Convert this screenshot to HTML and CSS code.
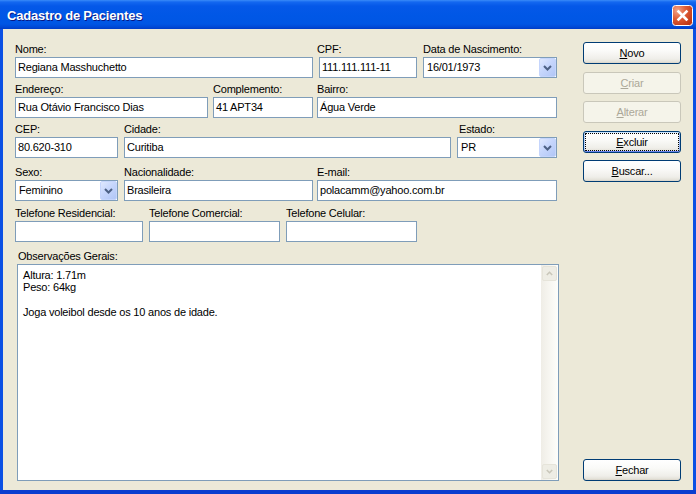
FILE: index.html
```html
<!DOCTYPE html>
<html lang="pt-BR">
<head>
<meta charset="utf-8">
<title>Cadastro de Pacientes</title>
<link rel="stylesheet" href="styles.css">
</head>
<body>
<div class="window">
  <div class="titlebar">
    <span class="title">Cadastro de Pacientes</span>
    <div class="close">
      <svg width="21" height="21" viewBox="0 0 21 21">
        <defs>
          <radialGradient id="cg" cx="25%" cy="25%" r="85%">
            <stop offset="0" stop-color="#F2A58A"/>
            <stop offset="0.5" stop-color="#DF5D36"/>
            <stop offset="1" stop-color="#BF3817"/>
          </radialGradient>
        </defs>
        <rect x="0.5" y="0.5" width="20" height="20" rx="3" fill="url(#cg)" stroke="#FFFFFF"/>
        <path d="M6.5 6.5L14.5 14.5M14.5 6.5L6.5 14.5" stroke="#FFFFFF" stroke-width="2.6" stroke-linecap="square"/>
      </svg>
    </div>
  </div>
  <div class="client">
    <div class="form">
      <div class="row">
        <div class="field w-nome"><label>Nome:</label><div class="input">Regiana Masshuchetto</div></div>
        <div class="field w-cpf"><label>CPF:</label><div class="input cpf-input">111.111.111-11</div></div>
        <div class="field w-data"><label>Data de Nascimento:</label>
          <div class="input select"><span class="val">16/01/1973</span><span class="dd"><svg width="9" height="6" viewBox="0 0 9 6"><path d="M1 1L4.5 4.5L8 1" stroke="#4D6185" stroke-width="2" fill="none"/></svg></span></div>
        </div>
      </div>
      <div class="row gap5">
        <div class="field w-end"><label>Endereço:</label><div class="input">Rua Otávio Francisco Dias</div></div>
        <div class="field w-comp"><label>Complemento:</label><div class="input">41 APT34</div></div>
        <div class="field w-bairro"><label>Bairro:</label><div class="input">Água Verde</div></div>
      </div>
      <div class="row gap5">
        <div class="field w-cep"><label>CEP:</label><div class="input">80.620-310</div></div>
        <div class="field w-cidade"><label>Cidade:</label><div class="input">Curitiba</div></div>
        <div class="field w-estado"><label class="lbl-estado">Estado:</label>
          <div class="input select"><span class="val">PR</span><span class="dd"><svg width="9" height="6" viewBox="0 0 9 6"><path d="M1 1L4.5 4.5L8 1" stroke="#4D6185" stroke-width="2" fill="none"/></svg></span></div>
        </div>
      </div>
      <div class="row gap8">
        <div class="field w-sexo"><label>Sexo:</label>
          <div class="input select"><span class="val">Feminino</span><span class="dd"><svg width="9" height="6" viewBox="0 0 9 6"><path d="M1 1L4.5 4.5L8 1" stroke="#4D6185" stroke-width="2" fill="none"/></svg></span></div>
        </div>
        <div class="field w-nac"><label>Nacionalidade:</label><div class="input">Brasileira</div></div>
        <div class="field w-email"><label>E-mail:</label><div class="input">polacamm@yahoo.com.br</div></div>
      </div>
      <div class="row gap6">
        <div class="field w-telres"><label>Telefone Residencial:</label><div class="input"></div></div>
        <div class="field w-telcom"><label>Telefone Comercial:</label><div class="input"></div></div>
        <div class="field w-telcel"><label>Telefone Celular:</label><div class="input"></div></div>
      </div>
      <div class="row gap8">
        <div class="field w-obs"><label class="lbl-obs">Observações Gerais:</label>
          <div class="memo">
            <div class="memo-text">Altura: 1.71m<br>Peso: 64kg<br><br>Joga voleibol desde os 10 anos de idade.</div>
            <div class="vscroll">
              <div class="sb-btn"><svg width="7" height="5" viewBox="0 0 7 5"><path d="M0.8 4L3.5 1.3L6.2 4" stroke="#C9C7BA" stroke-width="1.6" fill="none"/></svg></div>
              <div class="sb-btn"><svg width="7" height="5" viewBox="0 0 7 5"><path d="M0.8 1L3.5 3.7L6.2 1" stroke="#C9C7BA" stroke-width="1.6" fill="none"/></svg></div>
            </div>
          </div>
        </div>
      </div>
    </div>
    <div class="buttons">
      <div class="btn"><u>N</u>ovo</div>
      <div class="btn disabled"><u>C</u>riar</div>
      <div class="btn disabled"><u>A</u>lterar</div>
      <div class="btn focus"><u>E</u>xcluir</div>
      <div class="btn"><u>B</u>uscar...</div>
      <div class="btn fechar"><u>F</u>echar</div>
    </div>
  </div>
</div>
</body>
</html>
```

FILE: styles.css
```css
html, body {
  margin: 0;
  padding: 0;
}
body {
  width: 696px;
  height: 494px;
  overflow: hidden;
  font-family: "Liberation Sans", Arial, sans-serif;
  font-size: 11px;
  letter-spacing: -0.2px;
  color: #000;
}
.window {
  width: 696px;
  height: 494px;
  box-sizing: border-box;
  display: flex;
  flex-direction: column;
  background: #0B50E4;
  border-bottom: 4px solid #0A3DCF;
}
.titlebar {
  height: 29px;
  flex: none;
  display: flex;
  align-items: flex-start;
  padding: 0 3px 0 7px;
  background: linear-gradient(to bottom, #3A8BF8 0, #1468F0 2px, #0558E8 6px, #0057E6 16px, #0056E4 24px, #0049D6 27px, #003CC6 29px);
}
.title {
  margin-top: 8px;
  font-weight: bold;
  font-size: 13px;
  line-height: 15px;
  letter-spacing: -0.2px;
  color: #fff;
  text-shadow: 1px 1px #0A1883;
  white-space: nowrap;
}
.close {
  margin-left: auto;
  margin-top: 5px;
  width: 21px;
  height: 21px;
}
.close svg {
  display: block;
}
.client {
  flex: 1;
  margin: 0 3px;
  background: #ECE9D8;
  display: flex;
}
.form {
  width: 568px;
  flex: none;
  padding: 14px 0 0 12px;
}
.row {
  display: flex;
}
.gap5 { margin-top: 5px; }
.gap6 { margin-top: 6px; }
.gap8 { margin-top: 8px; }
.field {
  display: flex;
  flex-direction: column;
  flex: none;
}
label {
  display: block;
  height: 13px;
  line-height: 13px;
  margin-bottom: 1px;
  white-space: nowrap;
}
.input {
  height: 21px;
  box-sizing: border-box;
  border: 1px solid #7F9DB9;
  background: #fff;
  padding: 0 2px;
  line-height: 19px;
  white-space: nowrap;
  overflow: hidden;
}
.select {
  display: flex;
  padding: 0;
}
.select .val {
  flex: 1;
  padding-left: 3px;
}
.dd {
  width: 17px;
  height: 19px;
  box-sizing: border-box;
  border: 1px solid #C5D5FC;
  border-radius: 2px;
  background: linear-gradient(135deg, #DFE8FE 0%, #C6D6FC 45%, #B1C6F6 100%);
  display: flex;
  align-items: center;
  justify-content: center;
}
.dd svg { display: block; }

.w-nome { width: 298px; }
.w-cpf { width: 100px; margin-left: 4px; }
.cpf-input { margin-left: 2px; }
.w-data { width: 134px; margin-left: 6px; }

.w-end { width: 193px; }
.w-comp { width: 100px; margin-left: 5px; }
.w-bairro { width: 240px; margin-left: 4px; }

.w-cep { width: 103px; }
.w-cidade { width: 327px; margin-left: 6px; }
.w-estado { width: 100px; margin-left: 6px; }
.lbl-estado { padding-left: 2px; }

.w-sexo { width: 103px; }
.w-nac { width: 189px; margin-left: 6px; }
.w-email { width: 240px; margin-left: 4px; }

.w-telres { width: 128px; }
.w-telcom { width: 131px; margin-left: 6px; }
.w-telcel { width: 131px; margin-left: 6px; }

.w-obs { width: 542px; margin-left: 2px; }
.lbl-obs { padding-left: 1px; }

.memo {
  width: 542px;
  height: 217px;
  box-sizing: border-box;
  border: 1px solid #7F9DB9;
  background: #fff;
  display: flex;
}
.memo-text {
  flex: 1;
  padding: 4px 5px;
  line-height: 12.4px;
}
.vscroll {
  width: 17px;
  flex: none;
  box-sizing: border-box;
  padding: 1px;
  display: flex;
  flex-direction: column;
  justify-content: space-between;
  background: linear-gradient(to right, #EFEDE6, #F7F6F1 50%, #FEFEFB);
}
.sb-btn {
  width: 15px;
  height: 15px;
  box-sizing: border-box;
  border: 1px solid #E6E4DA;
  border-radius: 2px;
  background: #EEEDE5;
  display: flex;
  align-items: center;
  justify-content: center;
}
.sb-btn svg { display: block; }

.buttons {
  width: 98px;
  flex: none;
  padding: 13px 0 9px;
  box-sizing: border-box;
  display: flex;
  flex-direction: column;
  gap: 7.5px;
}
.btn {
  height: 22px;
  box-sizing: border-box;
  border: 1px solid #003C74;
  border-radius: 3px;
  background: linear-gradient(to bottom, #FFFFFF 0%, #FAFAF8 40%, #EFEEE9 80%, #E3E1D8 95%, #D6D0C5 100%);
  text-align: center;
  line-height: 20px;
  white-space: nowrap;
}
.btn u {
  text-underline-offset: 1px;
}
.btn.disabled {
  border-color: #C9C7BA;
  background: #F5F4EA;
  color: #ACA899;
}
.btn.focus {
  box-shadow: inset 0 1px #CEE7FF, inset 0 -1px #6982EE, inset 1px 0 #B8D0F9, inset -1px 0 #9AB8F2;
  outline: 1px dotted #000;
  outline-offset: -3px;
}
.btn.fechar {
  margin-top: auto;
}
```
